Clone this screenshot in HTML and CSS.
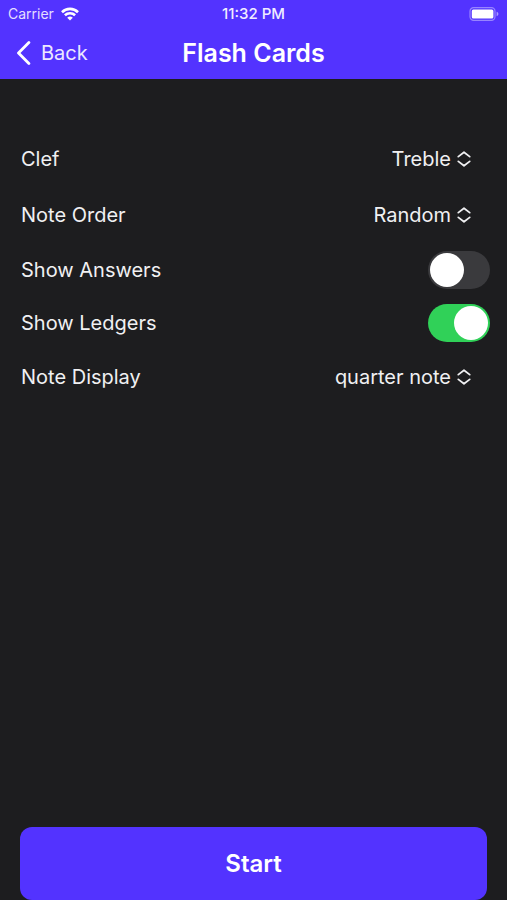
FILE: index.html
```html
<!DOCTYPE html>
<html lang="en">
<head>
<meta charset="utf-8">
<meta name="viewport" content="width=device-width, initial-scale=1">
<title>Flash Cards</title>
<link rel="stylesheet" href="styles.css">
</head>
<body>
<header class="header">
  <div class="status">
    <div class="status-carrier">
      <span>Carrier</span>
      <svg class="wifi" viewBox="0 0 18 14" aria-hidden="true">
        <g fill="none" stroke="#fff" stroke-width="2.6">
          <path d="M1 5.2a11.4 11.4 0 0 1 16 0"/>
          <path d="M3.9 8.3a7.3 7.3 0 0 1 10.2 0"/>
        </g>
        <path d="M9 13.6 6.2 10.8a4 4 0 0 1 5.6 0z" fill="#fff"/>
      </svg>
    </div>
    <span class="status-time">11:32 PM</span>
    <svg class="battery" viewBox="0 0 30 14" aria-hidden="true">
      <rect x="1" y=".7" width="25" height="12.6" rx="3.6" fill="none" stroke="#fff" stroke-opacity=".4" stroke-width="1.2"/>
      <rect x="2.8" y="2.5" width="21.6" height="9" rx="1.6" fill="#fff"/>
      <path d="M27.6 4.8c2.4.7 2.4 3.7 0 4.4z" fill="#fff" fill-opacity=".5"/>
    </svg>
  </div>
  <nav class="navbar">
    <a class="back" href="#">
      <svg class="back-icon" viewBox="0 0 14 24" aria-hidden="true"><path d="M12.4 1.6 2 12l10.4 10.4" fill="none" stroke="#fff" stroke-width="2.8" stroke-linecap="round" stroke-linejoin="round"/></svg>
      <span>Back</span>
    </a>
    <h1 class="title">Flash Cards</h1>
  </nav>
</header>
<main class="content">
  <form class="settings">
    <div class="row">
      <label for="clef">Clef</label>
      <div class="picker">
        <select id="clef"><option>Treble</option></select>
        <svg class="chevrons" viewBox="0 0 14 16" aria-hidden="true"><path d="M1.3 5.6 7 1.2 12.7 5.6M1.3 10.4 7 14.8 12.7 10.4"/></svg>
      </div>
    </div>
    <div class="row">
      <label for="order">Note Order</label>
      <div class="picker">
        <select id="order"><option>Random</option></select>
        <svg class="chevrons" viewBox="0 0 14 16" aria-hidden="true"><path d="M1.3 5.6 7 1.2 12.7 5.6M1.3 10.4 7 14.8 12.7 10.4"/></svg>
      </div>
    </div>
    <div class="row row-toggle">
      <label for="answers">Show Answers</label>
      <input class="toggle" id="answers" type="checkbox" role="switch">
    </div>
    <div class="row row-toggle">
      <label for="ledgers">Show Ledgers</label>
      <input class="toggle" id="ledgers" type="checkbox" role="switch" checked>
    </div>
    <div class="row">
      <label for="display">Note Display</label>
      <div class="picker">
        <select id="display"><option>quarter note</option></select>
        <svg class="chevrons" viewBox="0 0 14 16" aria-hidden="true"><path d="M1.3 5.6 7 1.2 12.7 5.6M1.3 10.4 7 14.8 12.7 10.4"/></svg>
      </div>
    </div>
  </form>
  <button class="start" type="button">Start</button>
</main>
</body>
</html>
```
FILE: styles.css
```css
* {
  box-sizing: border-box;
}

body {
  margin: 0;
  min-height: 100vh;
  display: flex;
  flex-direction: column;
  background: #1d1d1f;
  color: #f0f0f2;
  font-family: Inter, "Liberation Sans", sans-serif;
  font-size: 20px;
  line-height: 24px;
}

.header {
  background: #5333ff;
  color: #fff;
}

.status {
  display: grid;
  grid-template-columns: 1fr auto 1fr;
  align-items: center;
  height: 27px;
  padding: 0 8px;
  font-size: 14px;
  line-height: 16px;
}

.status-carrier {
  display: flex;
  align-items: center;
  gap: 7px;
  color: #e4deff;
}

.status-time {
  font-size: 15px;
  font-weight: 500;
  color: #f0ecff;
}

.wifi {
  width: 18px;
  height: 14px;
}

.battery {
  width: 30px;
  height: 14px;
  justify-self: end;
}

.navbar {
  display: grid;
  grid-template-columns: 1fr auto 1fr;
  align-items: center;
  height: 52px;
  padding: 0 16px;
}

.back {
  display: flex;
  align-items: center;
  gap: 10px;
  color: #ece8ff;
  text-decoration: none;
}

.back-icon {
  width: 15px;
  height: 24px;
}

.title {
  margin: 0;
  font-size: 25px;
  font-weight: 600;
  line-height: 32px;
}

.content {
  flex: 1;
  display: flex;
  flex-direction: column;
  justify-content: space-between;
  padding: 52px 0 0;
}

.row {
  display: flex;
  align-items: center;
  justify-content: space-between;
  height: 56px;
  padding: 0 36px 0 21px;
}

.row-toggle {
  height: 53px;
  padding-right: 17px;
}

.picker {
  display: grid;
  align-items: center;
}

.picker > * {
  grid-area: 1 / 1;
}

.picker select {
  appearance: none;
  margin: 0;
  padding: 0 20px 0 0;
  border: 0;
  background: transparent;
  color: inherit;
  font: inherit;
  text-align-last: right;
}

.chevrons {
  width: 14px;
  height: 16px;
  justify-self: end;
  pointer-events: none;
  fill: none;
  stroke: #f0f0f2;
  stroke-width: 1.8;
  stroke-linecap: round;
  stroke-linejoin: round;
}

.toggle {
  appearance: none;
  display: flex;
  align-items: center;
  width: 62px;
  height: 38px;
  margin: 0;
  padding: 0 2px;
  border-radius: 19px;
  background: #3a3a3d;
}

.toggle::before {
  content: "";
  width: 34px;
  height: 34px;
  border-radius: 50%;
  background: #fff;
}

.toggle:checked {
  justify-content: flex-end;
  background: #30d158;
}

.start {
  height: 73px;
  margin: 0 20px;
  border: 0;
  border-radius: 12px;
  background: #5333ff;
  color: #fff;
  font: inherit;
  font-size: 24px;
  font-weight: 600;
}
```
